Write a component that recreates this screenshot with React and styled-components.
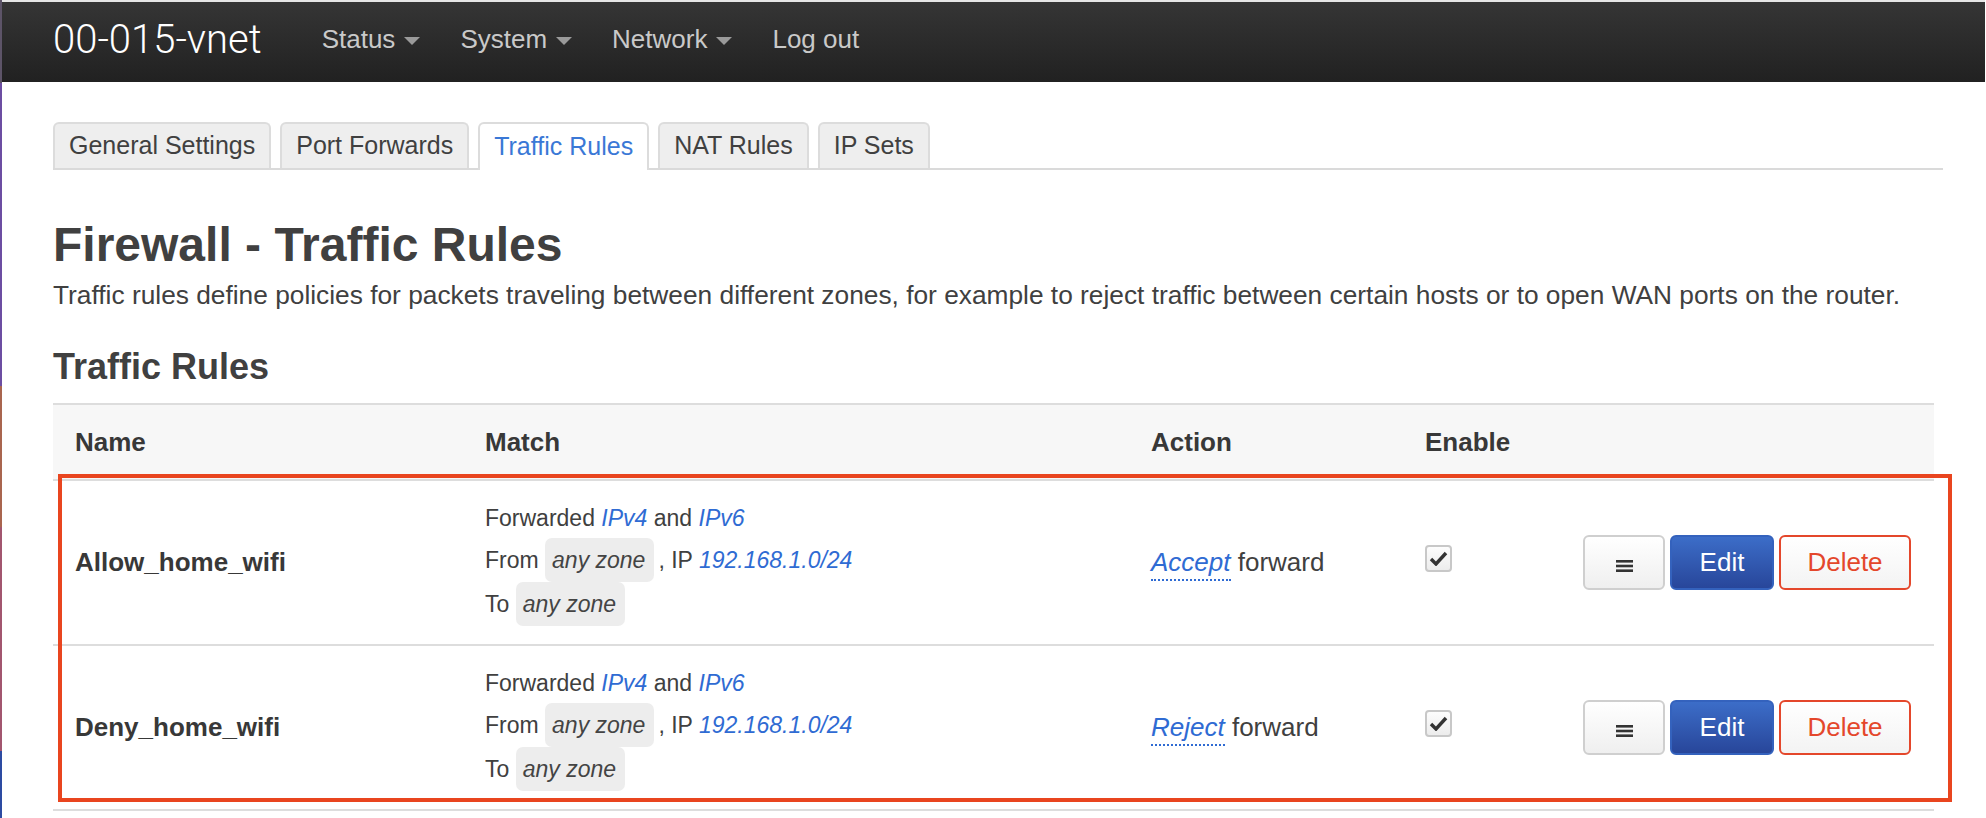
import React from 'react';
import styled, { createGlobalStyle } from 'styled-components';

const GlobalStyle = createGlobalStyle`
  html, body {
    margin: 0;
    padding: 0;
    background: #fff;
  }
  body {
    font-family: "Liberation Sans", Arial, sans-serif;
    color: #404040;
  }
`;

const Screen = styled.div`
  display: flex;
  height: 818px;
  overflow: hidden;
`;

// strip of desktop wallpaper showing at the left edge of the browser window
const DesktopEdge = styled.div`
  width: 2px;
  flex-shrink: 0;
  background: linear-gradient(
    to bottom,
    #5d5468 0, #5d5468 83px,
    #6c4ea2 83px, #6c4ea2 386px,
    #a9654f 386px, #a9654f 527px,
    #a2566f 527px, #a2566f 751px,
    #2d4ba2 751px
  );
`;

const Window = styled.div`
  flex: 1;
  min-width: 0;
  border-top: 2px solid #e6e6e6;
  margin-right: 1px;
`;

const Navbar = styled.header`
  height: 80px;
  box-sizing: border-box;
  display: flex;
  align-items: center;
  padding: 0 0 5px 51px;
  background: linear-gradient(to bottom, #353535, #212121);
`;

const Brand = styled.div`
  font-family: Roboto, "Liberation Sans", sans-serif;
  font-weight: 300;
  font-size: 40px;
  color: #fff;
  margin-right: 60px;
`;

const NavList = styled.nav`
  display: flex;
  align-items: center;
  gap: 40px;
`;

const NavItem = styled.div`
  display: flex;
  align-items: center;
  font-size: 26px;
  color: #c9c9c9;
`;

const Caret = styled.span`
  width: 0;
  height: 0;
  margin-left: 9px;
  margin-top: 3px;
  border-left: 8px solid transparent;
  border-right: 8px solid transparent;
  border-top: 8px solid #9a9a9a;
`;

const Content = styled.main`
  padding-left: 51px;
`;

const TabBar = styled.div`
  display: flex;
  gap: 9px;
  width: 1890px;
  margin-top: 40px;
  border-bottom: 2px solid #dadada;
`;

const Tab = styled.div`
  height: ${p => (p.$active ? '48px' : '46px')};
  margin-bottom: ${p => (p.$active ? '-2px' : '0')};
  box-sizing: border-box;
  padding: 0 14px 2px;
  display: flex;
  align-items: center;
  font-size: 25px;
  border: 2px solid #dcdcdc;
  border-bottom: none;
  border-radius: 6px 6px 0 0;
  background: ${p => (p.$active ? '#fff' : '#eeeeee')};
  color: ${p => (p.$active ? '#3a78d6' : '#404040')};
`;

const Title = styled.h2`
  margin: 49px 0 0;
  font-size: 48px;
  line-height: 52px;
  font-weight: bold;
  color: #404040;
`;

const Description = styled.p`
  margin: 6px 0 0;
  font-size: 26.3px;
  line-height: 36px;
`;

const SectionTitle = styled.h3`
  margin: 34px 0 0;
  font-size: 36px;
  line-height: 40px;
  font-weight: bold;
  color: #404040;
`;

const Table = styled.div`
  position: relative;
  width: 1881px;
  margin-top: 16px;
  border-top: 2px solid #dddddd;
`;

const Row = styled.div`
  display: grid;
  grid-template-columns: 410px 666px 274px 158px 373px;
  background: ${p => (p.$head ? '#f7f7f7' : '#fff')};
  height: ${p => (p.$head ? '74px' : '163px')};
  border-bottom: 2px solid #dddddd;
`;

const HeadCell = styled.div`
  display: flex;
  align-items: center;
  padding-left: 22px;
  font-size: 26px;
  font-weight: bold;
  color: #383838;
`;

const Cell = styled.div`
  display: flex;
  align-items: center;
  padding-left: 22px;
  font-size: 26px;
  justify-content: ${p => (p.$end ? 'flex-end' : 'flex-start')};
  padding-right: ${p => (p.$end ? '23px' : '0')};
  gap: 5px;
`;

const NameText = styled.span`
  font-weight: bold;
  color: #383838;
`;

const MatchCell = styled.div`
  display: flex;
  flex-direction: column;
  justify-content: center;
  padding-left: 22px;
  font-size: 23px;
  color: #404040;
`;

const MatchLine = styled.div`
  display: flex;
  align-items: center;
  white-space: pre;
  height: ${p => (p.$tall ? '44px' : '39px')};
`;

const Link = styled.em`
  color: #2f6bd3;
  font-style: italic;
`;

const Zone = styled.span`
  display: inline-flex;
  align-items: center;
  height: 44px;
  box-sizing: border-box;
  margin-right: 4px;
  padding: 0 9px 0 7px;
  border-radius: 7px;
  background: #ededed;
  font-style: italic;
  color: #444;
`;

const Verdict = styled.em`
  color: #2f6bd3;
  font-style: italic;
  padding-bottom: 2px;
  border-bottom: 2px dotted #2f6bd3;
`;

const CheckBox = styled.span`
  width: 27px;
  height: 27px;
  box-sizing: border-box;
  margin-bottom: 8px;
  border: 2px solid #c8c8c8;
  border-radius: 4px;
  background: linear-gradient(to bottom, #fdfdfd, #ececec);
  display: flex;
  align-items: center;
  justify-content: center;
`;

const variants = {
  plain: 'background: linear-gradient(to bottom, #ffffff, #efefef); border-color: #cfcfcf; color: #333;',
  primary: 'background: linear-gradient(to bottom, #3c6dc8, #28469a); border-color: #3462bd; color: #fff;',
  danger: 'background: linear-gradient(to bottom, #ffffff, #f3f3f3); border-color: #e4472b; color: #e4472b;',
};

const Button = styled.button`
  width: ${p => p.$w}px;
  height: 55px;
  box-sizing: border-box;
  padding: 0;
  border: 2px solid;
  border-radius: 6px;
  font-family: inherit;
  font-size: 26px;
  display: flex;
  align-items: center;
  justify-content: center;
  ${p => variants[p.$variant]}
`;

// red annotation frame drawn over the rule rows
const Highlight = styled.div`
  position: absolute;
  left: 5px;
  top: 69px;
  width: 1894px;
  height: 328px;
  box-sizing: border-box;
  border: 4px solid #e9451f;
  pointer-events: none;
`;

const MenuIcon = () => (
  <svg width="17" height="12" viewBox="0 0 17 12" style={{ marginTop: 6 }}>
    <rect x="0" y="0" width="17" height="2.6" fill="#333" />
    <rect x="0" y="4.7" width="17" height="2.6" fill="#333" />
    <rect x="0" y="9.4" width="17" height="2.6" fill="#333" />
  </svg>
);

const CheckIcon = () => (
  <svg width="19" height="15" viewBox="0 0 19 15">
    <polyline points="2,8 7,13 17,2" fill="none" stroke="#333" strokeWidth="3.4" />
  </svg>
);

const rules = [
  { name: 'Allow_home_wifi', verdict: 'Accept' },
  { name: 'Deny_home_wifi', verdict: 'Reject' },
];

const navItems = [
  { label: 'Status', menu: true },
  { label: 'System', menu: true },
  { label: 'Network', menu: true },
  { label: 'Log out', menu: false },
];

const tabs = ['General Settings', 'Port Forwards', 'Traffic Rules', 'NAT Rules', 'IP Sets'];

const App = () => {
  return (
    <>
      <GlobalStyle />
      <Screen>
        <DesktopEdge />
        <Window>
          <Navbar>
            <Brand>00-015-vnet</Brand>
            <NavList>
              {navItems.map(item => (
                <NavItem key={item.label}>
                  {item.label}
                  {item.menu && <Caret />}
                </NavItem>
              ))}
            </NavList>
          </Navbar>

          <Content>
            <TabBar>
              {tabs.map(t => (
                <Tab key={t} $active={t === 'Traffic Rules'}>{t}</Tab>
              ))}
            </TabBar>

            <Title>Firewall - Traffic Rules</Title>
            <Description>
              Traffic rules define policies for packets traveling between different zones, for example to reject traffic between certain hosts or to open WAN ports on the router.
            </Description>

            <SectionTitle>Traffic Rules</SectionTitle>

            <Table>
              <Row $head>
                <HeadCell>Name</HeadCell>
                <HeadCell>Match</HeadCell>
                <HeadCell>Action</HeadCell>
                <HeadCell>Enable</HeadCell>
                <HeadCell />
              </Row>
              {rules.map(rule => (
                <Row key={rule.name}>
                  <Cell><NameText>{rule.name}</NameText></Cell>
                  <MatchCell>
                    <MatchLine>
                      {'Forwarded '}<Link>IPv4</Link>{' and '}<Link>IPv6</Link>
                    </MatchLine>
                    <MatchLine $tall>
                      {'From '}<Zone>any zone</Zone>{', IP '}<Link>192.168.1.0/24</Link>
                    </MatchLine>
                    <MatchLine $tall>
                      {'To '}<Zone>any zone</Zone>
                    </MatchLine>
                  </MatchCell>
                  <Cell>
                    <span><Verdict>{rule.verdict}</Verdict> forward</span>
                  </Cell>
                  <Cell>
                    <CheckBox><CheckIcon /></CheckBox>
                  </Cell>
                  <Cell $end>
                    <Button $w={82} $variant="plain"><MenuIcon /></Button>
                    <Button $w={104} $variant="primary">Edit</Button>
                    <Button $w={132} $variant="danger">Delete</Button>
                  </Cell>
                </Row>
              ))}
              <Highlight />
            </Table>
          </Content>
        </Window>
      </Screen>
    </>
  );
};

export default App;
